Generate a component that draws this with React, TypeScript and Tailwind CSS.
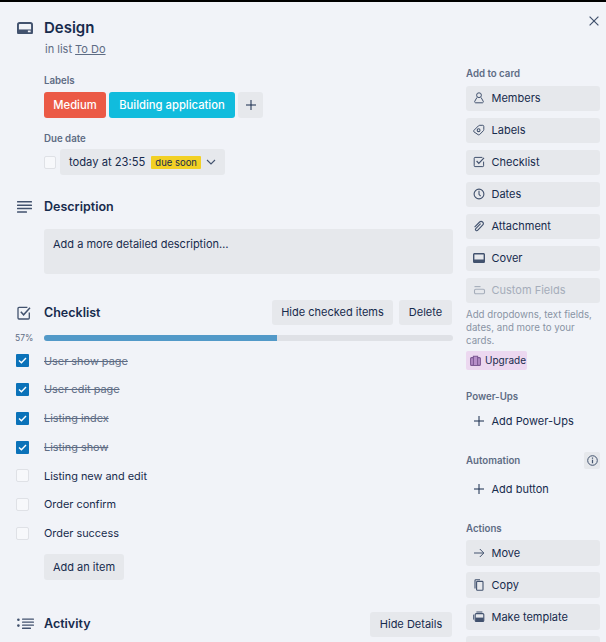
import type { ReactNode } from "react";

function CardIcon({ size = 16 }: { size?: number }) {
  return (
    <svg width={size} height={size * 0.8} viewBox="0 0 15 12" fill="none">
      <rect x="0.9" y="0.9" width="13.2" height="10.2" rx="1.6" stroke="#42526e" strokeWidth="1.8" />
      <rect x="1" y="7" width="13" height="4" fill="#42526e" />
      <rect x="10.2" y="8" width="2.6" height="1.6" fill="#f1f3f8" />
    </svg>
  );
}

function LinesIcon() {
  return (
    <svg width="15" height="12" viewBox="0 0 15 12" fill="#42526e">
      <rect x="0" y="0" width="15" height="1.5" rx="0.5" />
      <rect x="0" y="3.4" width="15" height="1.5" rx="0.5" />
      <rect x="0" y="6.8" width="15" height="1.5" rx="0.5" />
      <rect x="0" y="10.2" width="10" height="1.5" rx="0.5" />
    </svg>
  );
}

function CheckSquare({ size = 14, color = "#42526e" }: { size?: number; color?: string }) {
  return (
    <svg width={size} height={size} viewBox="0 0 14 14" fill="none" stroke={color}>
      <path d="M12.3 6.6V12a1 1 0 0 1-1 1H2a1 1 0 0 1-1-1V2.4a1 1 0 0 1 1-1h8.4" strokeWidth="1.3" />
      <path d="M3.8 5.8 6.6 8.8 13 1.8" strokeWidth="1.5" />
    </svg>
  );
}

function ActivityIcon() {
  return (
    <svg width="17" height="12" viewBox="0 0 17 12" fill="#42526e">
      <circle cx="1.4" cy="1.8" r="1.3" />
      <circle cx="1.4" cy="7.6" r="1.3" />
      <rect x="5" y="0.4" width="12" height="1.4" rx="0.5" />
      <rect x="5" y="3.4" width="12" height="1.4" rx="0.5" />
      <rect x="5" y="6.4" width="12" height="1.4" rx="0.5" />
      <rect x="5" y="9.6" width="9" height="1.4" rx="0.5" />
    </svg>
  );
}

function SideIcon({ name }: { name: string }) {
  const common = { width: 12, height: 12, viewBox: "0 0 12 12", fill: "none", stroke: "#42526e", strokeWidth: 1 };
  switch (name) {
    case "members":
      return (
        <svg {...common}>
          <circle cx="6" cy="3.2" r="2.4" />
          <path d="M4 5.4 1.8 9.2c-.4.8 0 1.6 1 1.6h6.4c1 0 1.4-.8 1-1.6L8 5.4" />
        </svg>
      );
    case "labels":
      return (
        <svg {...common}>
          <path d="M.9 6.4 5.4 1.9c.4-.4.9-.6 1.4-.6h3c.6 0 1 .5 1 1v3.2c0 .5-.2 1-.6 1.4L6.6 10.6c-.5.4-1.2.4-1.6 0L.9 7.8c-.4-.4-.4-1 0-1.4Z" />
          <circle cx="5.6" cy="6.2" r="1.4" strokeWidth="1.1" />
        </svg>
      );
    case "checklist":
      return (
        <svg {...common}>
          <path d="M10.6 5.6v4.2a.8.8 0 0 1-.8.8H2a.8.8 0 0 1-.8-.8V2.2A.8.8 0 0 1 2 1.4h7.4" />
          <path d="M3.6 5 5.8 7.4 11 1.8" strokeWidth="1.2" />
        </svg>
      );
    case "dates":
      return (
        <svg {...common}>
          <circle cx="6" cy="6" r="4.9" strokeWidth="1.1" />
          <path d="M6 2.8V6.4L7.6 8.2" strokeWidth="1.1" />
        </svg>
      );
    case "attachment":
      return (
        <svg {...common} strokeWidth="1.1">
          <path d="M1.6 7.2 6.6 2a2.2 2.2 0 0 1 3.2 3L4.8 10.2a1.3 1.3 0 0 1-2-1.7L7.6 3.6" />
        </svg>
      );
    case "cover":
      return (
        <svg {...common} viewBox="0 0 12 10" height={10} stroke="none" fill="#42526e">
          <path d="M1.6 0h8.8C11.3 0 12 .7 12 1.6v6.8c0 .9-.7 1.6-1.6 1.6H1.6C.7 10 0 9.3 0 8.4V1.6C0 .7.7 0 1.6 0Zm-.2 1.4v5.2h9.2V1.4Z" fillRule="evenodd" />
        </svg>
      );
    case "custom":
      return (
        <svg {...common} width={13} stroke="#a5adba" strokeWidth="1.1">
          <path d="M1 2.6h6" />
          <rect x="1" y="5.2" width="10" height="4.6" rx="1.2" />
        </svg>
      );
    case "plus":
      return (
        <svg {...common} stroke="#172b4d" strokeWidth="1">
          <path d="M6 1v10M1 6h10" />
        </svg>
      );
    case "move":
      return (
        <svg {...common}>
          <path d="M1 6h9.6M6.8 2l4 4-4 4" />
        </svg>
      );
    case "copy":
      return (
        <svg {...common}>
          <rect x="3.6" y="2.4" width="6.4" height="8.8" rx="0.8" strokeWidth="1.1" />
          <path d="M2 9.4V1.6A.8.8 0 0 1 2.8.8H7" strokeWidth="1.1" />
        </svg>
      );
    case "template":
      return (
        <svg {...common}>
          <rect x="2.2" y="2.6" width="8.6" height="7.8" rx="1" strokeWidth="1.1" />
          <rect x="2.4" y="6.6" width="8.2" height="3.6" fill="#42526e" stroke="none" />
          <path d="M.7 3.6v5M3.4 1h6" />
        </svg>
      );
    default:
      return null;
  }
}

function SectionHeader({ icon, title, right }: { icon: ReactNode; title: string; right?: ReactNode }) {
  return (
    <div className="flex items-center">
      <div className="flex w-[44px] shrink-0 justify-start pl-[17px]">{icon}</div>
      <h3 className="flex-1 text-[12.5px] font-semibold leading-[20px] text-[#172b4d]">{title}</h3>
      {right}
    </div>
  );
}

function GrayButton({ children, className = "" }: { children: ReactNode; className?: string }) {
  return (
    <div className={`flex items-center justify-center rounded-[3px] bg-[#e6e8ec] text-[11px] text-[#172b4d] ${className}`}>
      {children}
    </div>
  );
}

function SideButton({ icon, label, muted = false, plain = false }: { icon: string; label: string; muted?: boolean; plain?: boolean }) {
  return (
    <div
      className={`flex h-[25.6px] items-center rounded-[3px] pl-[7px] text-[11px] ${plain ? "" : "bg-[#e6e8ec]"} ${
        muted ? "text-[#a5adba]" : "text-[#172b4d]"
      }`}
    >
      <span className="flex w-[18.5px] shrink-0 items-center">
        <SideIcon name={icon} />
      </span>
      {label}
    </div>
  );
}

function SideTitle({ children }: { children: ReactNode }) {
  return <div className="text-[9.7px] font-semibold leading-[14px] text-[#5e6c84]">{children}</div>;
}

const checklist = [
  { text: "User show page", done: true },
  { text: "User edit page", done: true },
  { text: "Listing index", done: true },
  { text: "Listing show", done: true },
  { text: "Listing new and edit", done: false },
  { text: "Order confirm", done: false },
  { text: "Order success", done: false },
];

function ChecklistRow({ text, done }: { text: string; done: boolean }) {
  return (
    <div className="flex h-[28.7px] items-center">
      <div className="w-[44px] shrink-0 pl-[16px]">
        {done ? (
          <div className="flex h-[13px] w-[13px] items-center justify-center rounded-[1px] bg-[#0b72b9]">
            <svg width="9" height="7" viewBox="0 0 9 7" fill="none" stroke="#fff" strokeWidth="1.4">
              <path d="M1 3.6 3.4 5.8 8 1" />
            </svg>
          </div>
        ) : (
          <div className="h-[13px] w-[13px] rounded-[2px] border border-[#dfe1e6] bg-[#f7f8fb]" />
        )}
      </div>
      <span className={done ? "text-[10.9px] text-[#5e6c84] line-through" : "text-[10.9px] text-[#172b4d]"}>{text}</span>
    </div>
  );
}

export default function App() {
  return (
    <div className="relative h-[642px] w-[606px] overflow-hidden bg-[#f1f3f8] font-['Inter',sans-serif]">
      <div className="h-[2px] bg-black" />
      <svg className="absolute right-[7px] top-[16px]" width="10" height="10" viewBox="0 0 10 10" fill="none" stroke="#42526e" strokeWidth="1.2">
        <path d="M.6.6l8.8 8.8M9.4.6L.6 9.4" />
      </svg>

      <div className="flex">
        {/* main column */}
        <div className="w-[453px] shrink-0">
          <div className="flex items-center pt-[14px]">
            <div className="w-[44px] shrink-0 pl-[17px]">
              <CardIcon />
            </div>
            <h2 className="text-[15px] font-semibold leading-[24px] text-[#172b4d]">Design</h2>
          </div>
          <p className="ml-[45px] text-[11px] leading-[18px] text-[#5e6c84]">
            in list <span className="underline">To Do</span>
          </p>

          <div className="ml-[44px] mt-[16px]">
            <SideTitle>Labels</SideTitle>
            <div className="mt-[4px] flex gap-[3px]">
              <div className="flex h-[26px] w-[62px] items-center justify-center rounded-[3px] bg-[#eb5a46] text-[11.25px] font-medium text-white">Medium</div>
              <div className="flex h-[26px] w-[126px] items-center justify-center rounded-[3px] bg-[#11bcdd] text-[11.25px] font-medium text-white">Building application</div>
              <GrayButton className="h-[26px] w-[25px]">
                <SideIcon name="plus" />
              </GrayButton>
            </div>
          </div>

          <div className="ml-[44px] mt-[14px]">
            <SideTitle>Due date</SideTitle>
            <div className="mt-[3px] flex items-center gap-[4px]">
              <div className="h-[13px] w-[12px] rounded-[2px] border border-[#dfe1e6] bg-[#f7f8fb]" />
              <GrayButton className="h-[26px] w-[165px] !justify-start pl-[9px]">
                <span className="text-[11.2px]">today at 23:55</span>
                <span className="ml-[6px] rounded-[1px] bg-[#f2d024] px-[4px] text-[9.5px] leading-[13px]">due soon</span>
                <svg className="ml-[5px]" width="10" height="6" viewBox="0 0 10 6" fill="none" stroke="#42526e" strokeWidth="1.1">
                  <path d="M1 1l4 4 4-4" />
                </svg>
              </GrayButton>
            </div>
          </div>

          <div className="mt-[22px]">
            <SectionHeader icon={<LinesIcon />} title="Description" />
            <div className="ml-[44px] mt-[12px] h-[45px] rounded-[3px] bg-[#e6e8ec] px-[9px] py-[6px] text-[11px] leading-[18px] text-[#172b4d]">
              Add a more detailed description…
            </div>
          </div>

          <div className="mt-[26px]">
            <SectionHeader
              icon={<CheckSquare />}
              title="Checklist"
              right={
                <div className="mr-[1px] flex gap-[6px]">
                  <GrayButton className="h-[25px] w-[121px]">Hide checked items</GrayButton>
                  <GrayButton className="h-[25px] w-[53px]">Delete</GrayButton>
                </div>
              }
            />
            <div className="mt-[7px] flex items-center">
              <span className="w-[44px] shrink-0 pl-[15px] text-[8.5px] leading-[12px] text-[#5e6c84]">57%</span>
              <div className="h-[6px] flex-1 overflow-hidden rounded-[3px] bg-[#dfe1e6]">
                <div className="h-full w-[57%] bg-[#5299c8]" />
              </div>
            </div>
            <div className="mt-[2.6px]">
              {checklist.map((item) => (
                <ChecklistRow key={item.text} text={item.text} done={item.done} />
              ))}
            </div>
            <GrayButton className="ml-[44px] mt-[6.5px] h-[26px] w-[80px]">Add an item</GrayButton>
          </div>

          <div className="mt-[32px]">
            <SectionHeader
              icon={<ActivityIcon />}
              title="Activity"
              right={<GrayButton className="mr-[1px] h-[25px] w-[82px]">Hide Details</GrayButton>}
            />
          </div>
        </div>

        {/* sidebar */}
        <div className="ml-[13px] w-[134px] shrink-0 pt-[65px]">
          <SideTitle>Add to card</SideTitle>
          <div className="mt-[4.6px] flex flex-col gap-[6.4px]">
            <SideButton icon="members" label="Members" />
            <SideButton icon="labels" label="Labels" />
            <SideButton icon="checklist" label="Checklist" />
            <SideButton icon="dates" label="Dates" />
            <SideButton icon="attachment" label="Attachment" />
            <SideButton icon="cover" label="Cover" />
            <SideButton icon="custom" label="Custom Fields" muted />
          </div>
          <p className="mt-[5.4px] text-[9.7px] leading-[13px] text-[#8993a4]">Add dropdowns, text fields, dates, and more to your cards.</p>
          <div className="mt-[3.5px] flex h-[19px] w-[61px] items-center gap-[4px] rounded-[2px] bg-[#ecd8f0] pl-[4px] text-[10px] text-[#172b4d]">
            <svg width="11" height="11" viewBox="0 0 11 11" fill="#b78fc9" stroke="#7d5a94" strokeWidth="1.1">
              <rect x="0.6" y="2.6" width="9.8" height="7.8" rx="1" />
              <path d="M3.4 10V1.2h4.2V10" />
            </svg>
            Upgrade
          </div>

          <div className="mt-[20px]">
            <SideTitle>Power-Ups</SideTitle>
            <div className="mt-[4.5px]">
              <SideButton icon="plus" label="Add Power-Ups" plain />
            </div>
          </div>

          <div className="mt-[18px]">
            <div className="flex items-center justify-between">
              <SideTitle>Automation</SideTitle>
              <div className="flex h-[17px] w-[16px] items-center justify-center rounded-[2px] bg-[#e6e8ec]">
                <svg width="11" height="11" viewBox="0 0 11 11" fill="none" stroke="#42526e">
                  <circle cx="5.5" cy="5.5" r="4.8" />
                  <path d="M5.5 4.8V8.2M5.5 2.6V3.8" strokeWidth="1.2" />
                </svg>
              </div>
            </div>
            <div className="mt-[7px]">
              <SideButton icon="plus" label="Add button" plain />
            </div>
          </div>

          <div className="mt-[20px]">
            <SideTitle>Actions</SideTitle>
            <div className="mt-[4.5px] flex flex-col gap-[6.4px]">
              <SideButton icon="move" label="Move" />
              <SideButton icon="copy" label="Copy" />
              <SideButton icon="template" label="Make template" />
              <SideButton icon="" label="" />
            </div>
          </div>
        </div>
      </div>
    </div>
  );
}
